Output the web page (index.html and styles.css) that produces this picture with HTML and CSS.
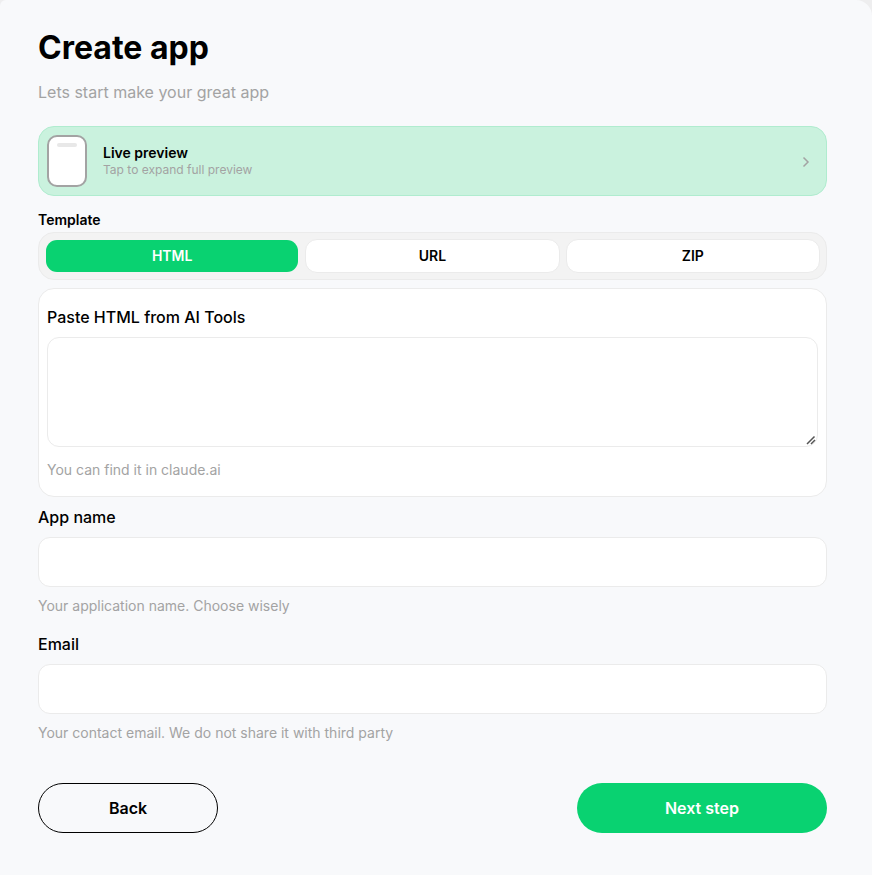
FILE: index.html
```html
<!DOCTYPE html>
<html lang="en">
<head>
    <meta charset="UTF-8">
    <meta name="viewport" content="width=device-width, initial-scale=1.0">
    <title>Create app</title>
    <link rel="stylesheet" href="styles.css">
</head>
<body>
    <form class="sheet">
        <h1>Create app</h1>
        <p class="subtitle">Lets start make your great app</p>

        <div class="preview">
            <div class="phone"><div class="phone-bar"></div></div>
            <div class="preview-text">
                <strong>Live preview</strong>
                <span>Tap to expand full preview</span>
            </div>
            <svg class="chevron" width="8" height="12" viewBox="0 0 8 12" fill="none">
                <path d="M1.500 1.500 6 6l-4.500 4.500" stroke="#a3a3a3" stroke-width="1.500"/>
            </svg>
        </div>

        <div class="template-label">Template</div>
        <div class="tabs">
            <button type="button" class="tab active">HTML</button>
            <button type="button" class="tab">URL</button>
            <button type="button" class="tab">ZIP</button>
        </div>

        <div class="card">
            <label class="field-label" for="html">Paste HTML from AI Tools</label>
            <textarea id="html"></textarea>
            <div class="hint">You can find it in claude.ai</div>
        </div>

        <div class="field">
            <label class="field-label" for="name">App name</label>
            <input id="name" type="text">
            <div class="hint">Your application name. Choose wisely</div>
        </div>

        <div class="field">
            <label class="field-label" for="email">Email</label>
            <input id="email" type="text">
            <div class="hint">Your contact email. We do not share it with third party</div>
        </div>

        <div class="actions">
            <button type="button" class="btn back">Back</button>
            <button type="button" class="btn next">Next step</button>
        </div>
    </form>
</body>
</html>
```

FILE: styles.css
```css
* {
    box-sizing: border-box;
}

html {
    background: #eeeeef;
}

body {
    margin: 0;
    font-family: Inter, "Liberation Sans", sans-serif;
    color: #000;
}

.sheet {
    height: 875px;
    padding: 26px 45px 0 38px;
    background: #f8f9fb;
    border-radius: 6px 16px 0 0;
}

h1 {
    margin: 0;
    font-size: 32px;
    line-height: 44px;
    font-weight: 700;
}

.subtitle {
    margin: 10px 0 0;
    font-size: 16px;
    line-height: 24px;
    color: #a3a3a3;
}

.preview {
    display: flex;
    align-items: center;
    height: 70px;
    margin-top: 22px;
    padding: 0 16px 0 8px;
    background: #caf2de;
    border: 1px solid #b0eccf;
    border-radius: 16px;
}

.phone {
    width: 40px;
    height: 52px;
    padding: 6px 8px;
    background: #fff;
    border: 2px solid #a3a3a3;
    border-radius: 10px;
}

.phone-bar {
    height: 4px;
    background: #e8e8e8;
    border-radius: 2px;
}

.preview-text {
    display: flex;
    flex-direction: column;
    flex: 1;
    margin: -1px 0 0 16px;
}

.preview-text strong {
    font-size: 14px;
    line-height: 17px;
    font-weight: 600;
}

.preview-text span {
    margin-top: 1px;
    font-size: 12px;
    line-height: 15px;
    color: #a3a3a3;
}

.chevron {
    margin-top: 2px;
}

.template-label {
    margin-top: 15px;
    font-size: 14px;
    line-height: 17px;
    font-weight: 600;
}

.tabs {
    display: flex;
    gap: 6px;
    height: 48px;
    margin-top: 4px;
    padding: 6px;
    background: #f3f3f3;
    border: 1px solid #ebebeb;
    border-radius: 16px;
}

.tab {
    flex: 1;
    padding: 0 0 1px;
    font-family: inherit;
    font-size: 14px;
    font-weight: 600;
    color: #000;
    background: #fff;
    border: 1px solid #ebebeb;
    border-radius: 12px;
}

.tab.active {
    color: #fff;
    background: #09d271;
    background-clip: padding-box;
    border-color: transparent;
}

.card {
    height: 209px;
    margin-top: 8px;
    padding: 18px 8px 0;
    background: #fff;
    border: 1px solid #ebebeb;
    border-radius: 16px;
}

.field-label {
    display: block;
    font-size: 16px;
    line-height: 20px;
    font-weight: 500;
}

textarea,
input {
    display: block;
    width: 100%;
    background: #fff;
    border: 1px solid #ebebeb;
    border-radius: 12px;
    outline: none;
}

textarea {
    height: 110px;
    margin-top: 10px;
    resize: vertical;
}

/* the handle sits 2px further in and is darker than the stock one */
textarea::-webkit-resizer {
    background: url("data:image/svg+xml,%3Csvg xmlns='http://www.w3.org/2000/svg' width='15' height='15'%3E%3Cpath d='M5 13 12.500 5.500M9 13l4-4' stroke='%23555' stroke-width='1.500' fill='none'/%3E%3C/svg%3E") right bottom no-repeat;
}

input {
    height: 50px;
    margin-top: 10px;
}

.hint {
    margin-top: 14px;
    font-size: 14px;
    line-height: 17px;
    color: #a3a3a3;
}

.field {
    margin-top: 10px;
}

.field + .field {
    margin-top: 20px;
}

.field .hint {
    margin-top: 10px;
}

.actions {
    display: flex;
    justify-content: space-between;
    margin-top: 42px;
}

.btn {
    height: 50px;
    font-family: inherit;
    font-size: 16px;
    font-weight: 600;
    border-radius: 25px;
}

.back {
    width: 180px;
    color: #000;
    background: transparent;
    border: 1px solid #000;
}

.next {
    width: 250px;
    color: #fff;
    background: #09d271;
    border: 0;
}
```
